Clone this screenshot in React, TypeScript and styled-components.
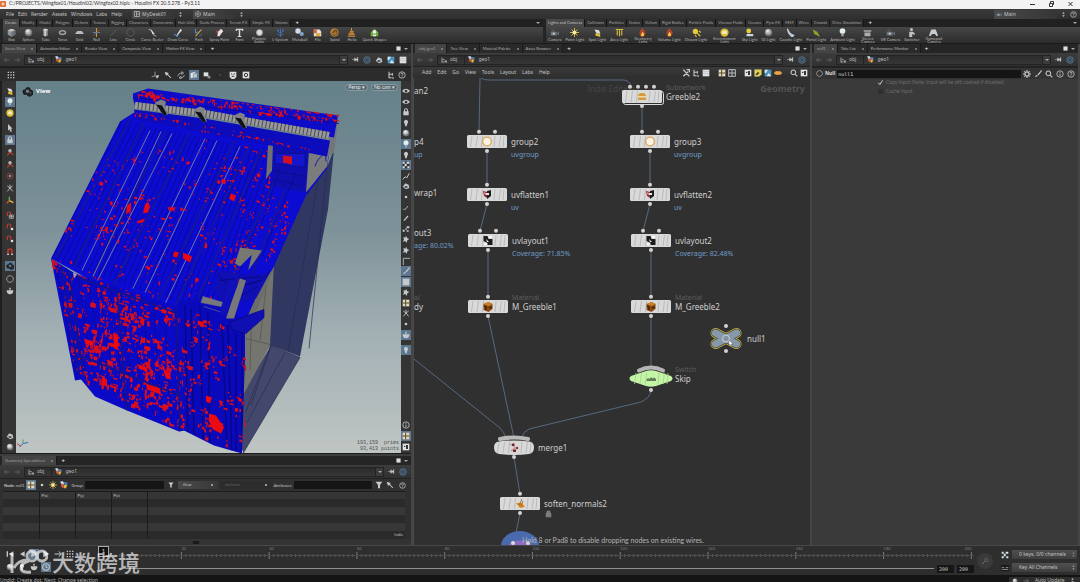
import React from "react";
import styled, { createGlobalStyle, css } from "styled-components";

const UI = `"Noto Sans", "Noto Sans CJK SC", sans-serif`;
const SMALL = `Lato, "Noto Sans", sans-serif`;

const GlobalStyle = createGlobalStyle`
  * { box-sizing: border-box; }
  html, body { margin: 0; background: #161616; }
  body { font-family: ${UI}; font-size: 5px; line-height: 7px; color: #c4c4c4; overflow: hidden; }
  button, input, select { font: inherit; color: inherit; margin: 0; padding: 0; border: 0; background: none; border-radius: 0; }
  a { color: inherit; text-decoration: none; }
  svg { display: block; }
`;

/* ---------- small icon set, drawn on a 12 x 12 grid ---------- */

type Draw = (c: string) => React.ReactNode;
const line = (d: string, w = 1.2): Draw => (c) => <path d={d} fill="none" stroke={c} strokeWidth={w} />;
const shape = (d: string): Draw => (c) => <path d={d} fill={c} />;

const drawings: Record<string, Draw> = {
  box: () => (
    <>
      <path d="M6 1 11 3v6l-5 2.500L1 9V3z" fill="#8f9499" />
      <path d="M6 1 11 3 6 5 1 3z" fill="#c3c7ca" />
      <path d="M6 5l5-2v6l-5 2.500z" fill="#6c7176" />
    </>
  ),
  sphere: (c) => (
    <>
      <circle cx="6" cy="6" r="5" fill="#70757a" />
      <circle cx="5.500" cy="5" r="3.600" fill={c} />
      <circle cx="5" cy="4" r="1.500" fill="#eef0f1" />
    </>
  ),
  tube: () => (
    <>
      <path d="M3 2h6v8q-3 2-6 0z" fill="#8e9499" />
      <path d="M4.500 3h2v8h-2z" fill="#cfd3d6" />
      <ellipse cx="6" cy="2.200" rx="3" ry="1.200" fill="#d8dadb" />
    </>
  ),
  torus: () => <ellipse cx="6" cy="6" rx="4" ry="2.500" fill="none" stroke="#9a9fa3" strokeWidth="2" />,
  grid: () => <path d="M3 4h6l3 4H0z" fill="#b9bdc0" />,
  nullAxes: () => (
    <>
      <path d="M6 0v12" stroke="#d6a63a" strokeWidth="1.200" />
      <path d="M1 6h10" stroke="#4f86c4" strokeWidth="1.200" />
      <path d="M2 10l8-8" stroke="#c2543a" />
    </>
  ),
  curve: () => (
    <>
      <path d="M1 2q5 0 5 4t5 5" fill="none" stroke="#9fb4c8" strokeWidth="1.200" />
      <path d="M3 1l6 7-3 0z" fill="#e3e6e8" />
    </>
  ),
  pen: () => (
    <>
      <path d="M10 1L5 9l-1 2 2-1 6-7z" fill="#d8dcdf" />
      <path d="M1 10q2-4 3 0t3 0" fill="none" stroke="#4e8cd0" strokeWidth="1.300" />
    </>
  ),
  path: () => (
    <>
      <path d="M2 11l8-9" stroke="#d8c24a" strokeWidth="1.400" />
      <path d="M2 1v6l3-2" stroke="#4e8cd0" strokeWidth="1.300" fill="none" />
      <path d="M7 11l4-3" stroke="#4e8cd0" />
    </>
  ),
  spray: () => (
    <>
      <path d="M4 5l4-4 3 3-5 7H3z" fill="#e9dede" />
      <path d="M1 3l3 2-1 3z" fill="#d04a3a" />
    </>
  ),
  font: () => <path d="M1 1h10v3H9.600L9 2.500H7v8h1.500V12h-5v-1.500H5v-8H3L2.400 4H1z" fill="#d4d7d9" />,
  platonic: () => (
    <>
      <circle cx="6" cy="6" r="4.500" fill="#a5a9ac" />
      <path d="M6 2l3.500 3L8 9H4L2.500 5z" fill="#dcdfe1" />
    </>
  ),
  lsystem: () => <path d="M6 12V1M6 7L1 3M6 7l5-4M6 10L2 8M6 10l4-2M3 5V1M9 5V1" stroke="#3f74b8" fill="none" strokeWidth="1.200" />,
  metaball: () => (
    <>
      <circle cx="4" cy="4" r="3.600" fill="#cfdcea" />
      <circle cx="9" cy="8" r="2.800" fill="#7ea6d0" />
    </>
  ),
  file: () => (
    <>
      <path d="M1 2h8l2 3v6H1z" fill="#e6e3dc" />
      <path d="M1 2h4v5H1z" fill="#d05a3a" />
      <path d="M5 7h6L8 11H3z" fill="#e0a03a" />
    </>
  ),
  spiral: () => (
    <>
      <circle cx="6" cy="6" r="5" fill="#6b4a22" stroke="#c98b3c" strokeWidth="1.200" />
      <path d="M6 6q1-2 2 0t-2 2-4-2 4-4" fill="none" stroke="#d99c4c" strokeWidth="1.200" />
    </>
  ),
  helix: () => (
    <>
      <path d="M6 1l5 9H1z" fill="#9a6526" />
      <path d="M6 0v3M4 5h5M2 8h8M1 11h10" fill="none" stroke="#d99c4c" strokeWidth="1.200" />
    </>
  ),
  quick: () => (
    <>
      <path d="M1 6l5-5 5 5v5H1z" fill="#6fae3c" />
      <circle cx="6" cy="5" r="2.500" fill="#eceeea" />
      <path d="M4 9h4v2H4z" fill="#e8f0e0" />
    </>
  ),
  circle: line("M6 1a5 5 0 1 0 .01 0z", 1),
  diag: line("M2 11L10 2", 1),
  camera: () => (
    <>
      <path d="M1 5h8v5H1zM9 7l3-2v5z" fill="#6d7479" />
      <circle cx="4" cy="3.500" r="2.200" fill="#4d5357" />
      <circle cx="5" cy="7.500" r="1.600" fill="#b8bdc0" />
    </>
  ),
  sun: () => (
    <>
      <path d="M6 0v12M0 6h12M2 2l8 8M10 2l-8 8" stroke="#e0c23a" strokeWidth="1.200" />
      <circle cx="6" cy="6" r="2.600" fill="#f6ecb0" />
    </>
  ),
  distant: () => (
    <>
      <circle cx="4.500" cy="4.500" r="3.500" fill="#e6cb3c" />
      <path d="M7 7l4 4M4 9l2 3M9 4l3 2" stroke="#d8bf38" strokeWidth="1.600" />
    </>
  ),
  spot: () => (
    <>
      <path d="M2 2l6 1 2 5-6-2z" fill="#dfe2e4" />
      <path d="M4 6l5 2 1 4-7-2z" fill="#e0c23a" />
    </>
  ),
  area: () => <path d="M1 2h10M3 3v7M6 3v8M9 3v7" stroke="#d9bd3c" strokeWidth="1.500" fill="none" />,
  flame: () => (
    <>
      <path d="M6 0q5 5 4 8t-4 4-4-4 4-8z" fill="#a8432c" />
      <path d="M6 5q2 2 2 4t-2 2-2-2z" fill="#f0d04a" />
    </>
  ),
  sky: () => (
    <>
      <circle cx="5" cy="4" r="3.200" fill="#e6cb3c" />
      <path d="M2 8h9v3H2z" fill="#c9d5df" />
    </>
  ),
  env: () => (
    <>
      <circle cx="6" cy="6" r="5.500" fill="#d8bf38" />
      <path d="M3 5q3-4 6 0v3H3z" fill="#f3ecc2" />
    </>
  ),
  bulb: () => (
    <>
      <circle cx="6" cy="4" r="3.800" fill="#e4f0ea" />
      <path d="M4.500 7h3v4h-3z" fill="#9fb0a8" />
    </>
  ),
  caustic: () => <path d="M2 1q2 7 9 9l-3 2Q2 8 2 1z" fill="#b8c9dc" stroke="#d9e4ef" />,
  portal: () => <path d="M1 2l6 3 4 7-8-4z" fill="#87a52c" />,
  stereo: () => <path d="M1 3h10v2H1zM2 6h8v5H2z" fill="#a9adb0" />,
  person: () => <path d="M6 0a2 2 0 1 1 0 4 2 2 0 0 1 0-4zM3 5h5l3 3-1 1-3-1v4H3z" fill="#bfc3c6" />,
  gamepad: () => <path d="M3 2h6l3 8-2 1-2-3H4l-2 3-2-1z" fill="#c9ccce" />,
  dotgrid: shape("M1 1h2v2H1zM5 1h2v2H5zM9 1h2v2H9zM1 5h2v2H1zM5 5h2v2H5zM9 5h2v2H9zM1 9h2v2H1zM5 9h2v2H5zM9 9h2v2H9z"),
  cursor: shape("M3 0l7 7H7l2 4-2 1-2-4-2 2z"),
  lock: shape("M2 5h1V3.500a3 3 0 0 1 6 0V5h1v6H2zM4.500 5h3V3.500a1.500 1.500 0 0 0-3 0z"),
  select: () => (
    <>
      <path d="M2 11l4-5 5 4" stroke="#b8402e" strokeWidth="1.800" fill="none" />
      <circle cx="6" cy="4" r="2.600" fill="#b5b8ba" />
    </>
  ),
  ring: () => (
    <>
      <circle cx="6" cy="6" r="4.200" fill="none" stroke="#8a3a32" strokeWidth="1.500" />
      <circle cx="6" cy="6" r="2" fill="#8c9093" />
    </>
  ),
  joint: line("M6 1v5M6 6l-4 5M6 6l4 5M2 3l4 3 4-3", 1.300),
  axes: () => (
    <>
      <path d="M5 7V1" stroke="#62b04a" strokeWidth="2" />
      <path d="M5 7l-4 4" stroke="#d4483a" strokeWidth="2" />
      <path d="M5 7l6 3" stroke="#e0c23a" strokeWidth="2" />
    </>
  ),
  magnet: () => (
    <>
      <path d="M3 11V6a3 3 0 0 1 6 0v5" fill="none" stroke="#c23a30" strokeWidth="2.400" />
      <path d="M1.800 10h2.400v2H1.800zM7.800 10h2.400v2H7.800z" fill="#dfe1e2" />
    </>
  ),
  magnetGrid: () => (
    <>
      <path d="M2 8V4a2.500 2.500 0 0 1 5 0v4" fill="none" stroke="#c23a30" strokeWidth="1.800" />
      <path d="M5 6h6v5H5zM8 6v5M5 8.500h6" fill="none" stroke="#cfd2d4" strokeWidth=".9" />
    </>
  ),
  magnetDot: () => (
    <>
      <path d="M2 8V4a2.500 2.500 0 0 1 5 0v3" fill="none" stroke="#c23a30" strokeWidth="1.800" />
      <circle cx="9" cy="9" r="2" fill="#dfe1e2" />
    </>
  ),
  blob: () => (
    <>
      <path d="M1 5l3-1 1-2h3l1 2 3 2v3l-3 2H7L5 9 2 9z" fill="#23272a" stroke="#101213" />
      <path d="M5 4h2l1 2-2 2-2-2z" fill="#79828a" />
      <path d="M8 6l2 1-1 2z" fill="#5c656c" />
    </>
  ),
  bowl: shape("M1 5h10q0 6-5 6T1 5zM5 1h2v3H5z"),
  eye: shape("M0 6q6-7 12 0-6 6-12 0zM6 4a2 2 0 1 0 .01 0z"),
  pin: shape("M6 1a3.500 3.500 0 0 1 2 6l-1 4H5L4 7a3.500 3.500 0 0 1 2-6z"),
  dot: shape("M6 4a2 2 0 1 1 0 4 2 2 0 0 1 0-4z"),
  tick: line("M2 7l2 2 5-6", 1.200),
  slash: line("M3 10l6-7", 1.800),
  nodes: shape("M1 7h3v3H1zM7 2h4v3H7zM5 5h2v2H5zM7 8h3v2H7z"),
  star: shape("M6 1l2 4 3 1-3 2-1 4-2-3-4 1 2-3-1-4 3 1z"),
  corner: line("M2 12V2h10", 1.200),
  square: shape("M1 1h10v10H1z"),
  frame: () => (
    <>
      <path d="M1 1h10v10H1z" fill="#e2e4e5" />
      <path d="M3 4h2v2H3zM6 3h3v6H6z" fill="#33373a" />
    </>
  ),
  axisPick: () => <path d="M6 1v6M6 7l-5 2M6 7l3 3M8 7h4l-3 4z" fill="#c6c9cb" stroke="#c6c9cb" />,
  loop: () => <path d="M1 8q1-5 6-5M7 1l3 2-3 2zM11 6q0 4-5 4M6 8v4L3 10z" fill="none" stroke="#c6c9cb" />,
  cards: () => (
    <>
      <path d="M1 3l7-2v8l-7 2z" fill="#dfe5ea" />
      <path d="M5 4l6-1v7l-6 1z" fill="#b9c4cf" stroke="#51687f" strokeWidth=".7" />
    </>
  ),
  thumb: () => (
    <>
      <path d="M1 2h7v6H1z" fill="#dcdedf" />
      <circle cx="9" cy="9" r="2.400" fill="#888d90" />
    </>
  ),
  checker: () => (
    <>
      <path d="M1 1h10v10H1z" fill="#2e3336" />
      <path d="M1 1h3v3H1zM7 1h4v3H7zM4 4h3v4H4zM1 8h3v3H1zM8 8h3v3H8z" fill="#dde0e2" />
    </>
  ),
  page: () => (
    <>
      <path d="M1 1h10v7l-3 3H1z" fill="#dfcf4a" stroke="#f1e9a0" strokeWidth=".6" />
      <path d="M2 9l4-5 2 2-3 3z" fill="#3a3a2c" />
    </>
  ),
  picture: () => (
    <>
      <path d="M1 1h10v10H1z" fill="#4a93bb" />
      <path d="M1 1h5L3 6H1zM7 6l4 5H4z" fill="#d9e6ee" />
    </>
  ),
  basket: () => (
    <>
      <path d="M2 3h8v6H2z" fill="#d68a2c" />
      <path d="M0 5h12v2H0z" fill="#efb457" />
    </>
  ),
  layout: () => (
    <>
      <path d="M1 1h10v10H1z" fill="#e0d9bd" />
      <path d="M5.500 1v10M1 6h10" stroke="#5a4a28" strokeWidth="1.500" />
    </>
  ),
  gridLine: line("M1 1h10v10H1zM1 6h10M6 1v10", 1.400),
  wrench: line("M2 11l7-7M2 1l9 10M7 1h4v4", 2),
  tree: line("M3 1v9h4M3 5h4M8 3v4M9 9v3", 1.600),
  list: () => (
    <>
      <path d="M1 1h10v10H1z" fill="#dfe1e2" />
      <path d="M1 4h10M1 7h10" stroke="#a5a8aa" strokeWidth=".7" />
    </>
  ),
  scope: () => (
    <>
      <path d="M0 2h12v8H0z" fill="#0e0e0e" />
      <path d="M1 5h4M7 5h4M1 8h10" stroke="#dcdedf" />
    </>
  ),
  search: line("M5 1.500a3.500 3.500 0 1 0 .01 0zM8 8l3 3", 1.600),
  pushpin: shape("M0 5.500h4V3h2v1.500h3V2h1.500v8H9V7.500H6V9H4V6.500H0z"),
  globe: () => (
    <>
      <circle cx="6" cy="6" r="5" fill="#34495d" stroke="#6c8194" strokeWidth="1" />
      <circle cx="6" cy="6" r="2.500" fill="none" stroke="#52687c" />
    </>
  ),
  help: (c) => (
    <>
      <circle cx="6" cy="6" r="4.800" fill="none" stroke={c} strokeWidth="1.200" />
      <path d="M4.300 4.800q0-1.500 1.700-1.500t1.700 1.300Q7.700 5.500 6 6.300v.9M6 8v1.200" fill="none" stroke={c} strokeWidth="1.100" />
    </>
  ),
  info: (c) => (
    <>
      <circle cx="6" cy="6" r="4.800" fill="none" stroke={c} strokeWidth="1.200" />
      <path d="M6 3v1.200M6 5.300V9" stroke={c} strokeWidth="1.300" />
    </>
  ),
  gear: line("M6 3a3 3 0 1 0 .01 0zM6 0v3M6 9v3M0 6h3M9 6h3M2 2l2 2M8 8l2 2M10 2L8 4M4 8l-2 2", 1.700),
  brush: shape("M11 0L5 7l2 1 5-7zM4 7L1 11l5-2z"),
  back: line("M11 6H1M5 2L1 6l4 4", 1.500),
  fwd: line("M1 6h10M7 2l4 4-4 4", 1.500),
  objNet: shape("M1 1h2v8h3v2H1zM4 4h3v2H4zM7 7h5v4H7z"),
  geo: () => (
    <>
      <path d="M0 1l4-1 3 4-4 2z" fill="#c9d3da" />
      <path d="M1 6l5-2v6H3z" fill="#d4553a" />
      <path d="M6 2h5v4H7z" fill="#4a7fc0" />
      <path d="M6 6h5l-2 5H6z" fill="#e0b63a" />
    </>
  ),
  funnel: shape("M1 1h10L7.500 6v5h-3V6z"),
  marker: line("M1 11l4-4 2 2 4-7", 1.500),
  arrowPick: shape("M1 1l6 2-1 2 5 5-1 1-5-5-2 1z"),
  pane: line("M1 1h10v10H1zM5 1v10M5 6h6", 1.300),
  target: line("M6 1a5 5 0 1 0 .01 0zM6 3v6M3 6h6", 1.200),
  updown: shape("M6 0l3 4H3zM6 12l3-4H3z"),
  cloud: () => (
    <>
      <path d="M1 7l4-5 5 2 1 5-5 2z" fill="#bfc3c6" />
      <path d="M4 6h4v3H4z" fill="#55595c" />
    </>
  ),
  clock: line("M6 1a5 5 0 1 0 .01 0zM6 3v3l2 1", 1.600),
  skull: () => (
    <>
      <path d="M1 1h10v8l-3 3H4L1 9z" fill="#dcdedf" />
      <path d="M3 4l2 1M9 4L7 5M4 8h4" stroke="#2b2b2b" strokeWidth="1.400" />
    </>
  ),
  camBox: () => (
    <>
      <path d="M1 1h10v10H1z" fill="#dcdedf" />
      <circle cx="6" cy="6" r="2.500" fill="none" stroke="#2b2b2b" strokeWidth="1.400" />
    </>
  ),
  key: line("M8 2a2.500 2.500 0 1 0 .01 0zM6 6l-5 5M3 9l1 1", 1),
  first: shape("M1 2h2v8H1zM11 2v8L4 6z"),
  prev: shape("M10 2v8L3 6z"),
  play: shape("M2 1l9 5-9 5z"),
};

const Icon = ({ name, size = 8, color = "#c6c9cb" }: { name: string; size?: number; color?: string }) => (
  <svg width={size} height={size} viewBox="0 0 12 12" aria-hidden="true">
    {drawings[name](color)}
  </svg>
);

/* ---------- frame ---------- */

const Desktop = styled.div`
  display: flex;
  flex-direction: column;
  height: 100vh;
  min-height: 400px;
  background: #2b2b2b;
`;

const TitleBar = styled.header`
  display: flex;
  align-items: center;
  flex: 0 0 9px;
  gap: 3px;
  padding: 0 7px 2px 0;
  background: #f3f3f3;
  color: #333;
  font-family: ${SMALL};
  white-space: nowrap;
`;
const AppBadge = styled.span`
  width: 6px;
  height: 6px;
  margin-top: 1px;
  border-radius: 1px;
  background: radial-gradient(circle at 3px 3px, #f6c9a8 1px, #e0703a 2px);
`;
const WindowButtons = styled.div`
  display: flex;
  gap: 14px;
  margin-left: auto;
`;
const WindowButton = styled.button`
  width: 5px;
  height: 6px;
`;

const MenuBar = styled.nav`
  display: flex;
  align-items: center;
  flex: 0 0 10px;
  padding: 0 3px 0 6px;
  gap: 4px;
  background: linear-gradient(#3a3a3a, #2f2f2f);
`;
const MenuItem = styled.button`
  height: 9px;
  white-space: nowrap;
`;
const DesktopPicker = styled.button<{ $push?: boolean }>`
  display: flex;
  align-items: center;
  gap: 2px;
  width: ${(p) => (p.$push ? 63 : 42)}px;
  height: 9px;
  padding-left: 2px;
  margin-left: ${(p) => (p.$push ? "auto" : "6px")};
  background: linear-gradient(90deg, #4a4a4a, #353535);
`;

/* ---------- shelves ---------- */

const Shelves = styled.section`
  display: grid;
  grid-template-columns: minmax(0, 543fr) minmax(0, 537fr);
  flex: 0 0 25px;
  border-bottom: 1px solid #1b1b1b;
`;
const Shelf = styled.div`
  display: flex;
  flex-direction: column;
  min-width: 0;
  overflow: hidden;
  border-left: 3px solid #242424;
`;
const ShelfTabs = styled.div`
  display: flex;
  align-items: stretch;
  flex: 0 0 8px;
  background: #212121;
`;
const ShelfTab = styled.button<{ $active?: boolean }>`
  padding: 0 2px;
  border-right: 1px solid #151515;
  background: ${(p) => (p.$active ? "#484848" : "#2d2d2d")};
  color: ${(p) => (p.$active ? "#c0c0c0" : "#a4a4a4")};
  font-family: ${SMALL};
  font-size: 4px;
  line-height: 8px;
  white-space: nowrap;
`;
const PlusTab = styled.button`
  width: 12px;
  color: #e8e8e8;
  font-size: 6px;
  font-weight: 700;
  line-height: 8px;
`;
const TabTail = styled.span`
  display: flex;
  align-items: center;
  gap: 3px;
  margin-left: auto;
  padding-right: 3px;
`;
const ShelfTools = styled.div`
  display: flex;
  align-items: stretch;
  flex: 1;
  background: linear-gradient(#464646, #2c2c2c);
`;
const Tool = styled.button<{ $two?: boolean }>`
  display: flex;
  flex-direction: column;
  align-items: center;
  flex: none;
  min-width: 17px;
  padding: 1px ${(p) => (p.$two ? 4 : 2)}px 0;
  color: #b4b4b4;
  font-family: ${SMALL};
  font-size: 4px;
  line-height: 4px;
  text-align: center;
  white-space: pre;
`;
const ToolLabel = styled.span<{ $two?: boolean }>`
  margin-top: ${(p) => (p.$two ? 0 : 1)}px;
  line-height: ${(p) => (p.$two ? 3 : 4)}px;
`;

/* ---------- panes ---------- */

const Workspace = styled.main`
  display: grid;
  grid-template-columns: minmax(0, 413fr) minmax(0, 399fr) minmax(0, 268fr);
  flex: 1;
  min-height: 0;
`;
const Pane = styled.section<{ $tone?: string }>`
  display: flex;
  flex-direction: column;
  min-width: 0;
  min-height: 0;
  border-right: 2px solid #454545;
  background: ${(p) => p.$tone || "#2f2f2f"};
`;
const PaneTabs = styled.div`
  display: flex;
  flex: 0 0 9px;
  padding-left: 2px;
  background: #252525;
`;
const PaneTab = styled.button<{ $active?: boolean }>`
  display: flex;
  align-items: center;
  justify-content: space-between;
  gap: 6px;
  padding: 0 3px;
  border-right: 1px solid #1a1a1a;
  background: ${(p) => (p.$active ? "#444" : "#2a2a2a")};
  color: ${(p) => (p.$active ? "#a0a0a0" : "#b4b4b4")};
  font-family: ${SMALL};
  font-size: 4px;
  line-height: 9px;
  white-space: nowrap;
  &::after {
    content: "";
    width: 2px;
    height: 2px;
    border-radius: 1px;
    background: #8a8a8a;
  }
`;
const PathRow = styled.div`
  display: flex;
  align-items: center;
  flex: 0 0 14px;
  gap: 2px;
  padding: 0 3px 0 4px;
  background: linear-gradient(#3c3c3c, #313131);
  border-bottom: 1px solid #222;
`;
const PathNav = styled.button`
  width: 8px;
  opacity: 0.35;
`;
const PathField = styled.div`
  display: flex;
  align-items: center;
  flex: 1;
  min-width: 0;
  height: 10px;
  padding-left: 3px;
  gap: 3px;
  border: 1px solid #232323;
  background: linear-gradient(#2c2c2c, #363636);
`;
const PathPart = styled.a`
  display: flex;
  align-items: center;
  gap: 3px;
  height: 8px;
  padding-right: 4px;
  color: #bdbdbd;
  & + & { border-left: 1px solid #222; padding-left: 3px; }
`;
const DropButton = styled.button`
  display: flex;
  align-items: center;
  justify-content: center;
  width: 8px;
  height: 8px;
  margin-left: auto;
  border-left: 1px solid #222;
  background: #3b3b3b;
`;
const Caret = styled.span`
  border: solid transparent;
  border-width: 2px 2px 0;
  border-top-color: #a8a8a8;
`;
const IconButton = styled.button<{ $on?: boolean; $dim?: boolean }>`
  display: flex;
  align-items: center;
  justify-content: center;
  flex: none;
  width: 10px;
  height: 10px;
  background: ${(p) => (p.$on ? "#5d7790" : "transparent")};
  opacity: ${(p) => (p.$dim ? 0.3 : 1)};
`;
const Toolbar = styled.div`
  display: flex;
  align-items: center;
  justify-content: center;
  flex: 0 0 14px;
  padding: 0 4px 0 7px;
  background: #2c2c2c;
  border-top: 1px solid #1c1c1c;
`;
const ToolGroup = styled.div<{ $start?: boolean; $end?: boolean; $gap?: number }>`
  display: flex;
  align-items: center;
  gap: ${(p) => p.$gap ?? 1}px;
  ${(p) => p.$start && css`margin-right: auto;`}
  ${(p) => p.$end && css`margin-left: auto;`}
`;

/* ---------- scene viewer ---------- */

const SceneArea = styled.div`
  display: flex;
  flex: 1;
  min-height: 0;
`;
const Strip = styled.div<{ $wide?: boolean }>`
  display: flex;
  flex-direction: column;
  align-items: center;
  flex: 0 0 ${(p) => (p.$wide ? 16 : 10)}px;
  padding: 5px 0 0 ${(p) => (p.$wide ? 2 : 0)}px;
  background: #343434;
  border-left: ${(p) => (p.$wide ? 2 : 0)}px solid #1e1e1e;
  overflow: hidden;
`;
const StripGroup = styled.div<{ $h: number; $bottom?: boolean }>`
  display: flex;
  flex-direction: column;
  justify-content: space-between;
  flex: 0 0 ${(p) => p.$h}px;
  margin-top: ${(p) => (p.$bottom ? "auto" : "0")};
  margin-bottom: ${(p) => (p.$bottom ? 1 : 5)}px;
`;
const Viewport = styled.div`
  position: relative;
  flex: 1;
  min-width: 0;
  background: linear-gradient(#648089, #7e9299 40%, #a2b0b4 68%, #bfc5c3);
  overflow: hidden;
`;
const ModelDrawing = styled.svg`
  position: absolute;
  inset: 0;
  width: 100%;
  height: 100%;
`;
const ViewTitle = styled.div`
  position: absolute;
  top: 5px;
  left: 6px;
  display: flex;
  align-items: center;
  gap: 3px;
  color: #fff;
  font-size: 6px;
  font-weight: 700;
`;
const CameraMenus = styled.div`
  position: absolute;
  top: 3px;
  right: 3px;
  display: flex;
  gap: 3px;
`;
const CameraMenu = styled.button`
  height: 7px;
  padding: 0 2px;
  border: 1px solid #8b9ba1;
  border-radius: 4px;
  background: #566a72;
  color: #e6e6e6;
  font-family: ${SMALL};
  font-size: 5px;
  line-height: 5px;
`;
const Stats = styled.div`
  position: absolute;
  right: 2px;
  bottom: 1px;
  color: #4c5250;
  font-family: "Liberation Mono", monospace;
  font-size: 5px;
  line-height: 6px;
  text-align: right;
  white-space: pre;
`;

function seeded(seed: number) {
  let s = seed;
  return () => {
    s = (s * 16807) % 2147483647;
    return s / 2147483647;
  };
}

type Pt = [number, number];
const speckle = (seed: number, n: number, a: Pt, b: Pt, c: Pt, d: Pt, max: number, spread = 0.09) => {
  const r = seeded(seed);
  const out: string[] = [];
  let cu = 0.5;
  let cv = 0.5;
  for (let i = 0; i < n; i++) {
    if (i % 4 === 0) {
      cu = r();
      cv = r();
    }
    const u = Math.min(1, Math.max(0, cu + (r() - 0.5) * spread));
    const v = Math.min(1, Math.max(0, cv + (r() - 0.5) * spread));
    const x = (1 - v) * ((1 - u) * a[0] + u * b[0]) + v * ((1 - u) * d[0] + u * c[0]);
    const y = (1 - v) * ((1 - u) * a[1] + u * b[1]) + v * ((1 - u) * d[1] + u * c[1]);
    const w = 0.8 + r() * r() * max;
    const h = 0.8 + r() * r() * max;
    out.push(`M${x.toFixed(1)} ${y.toFixed(1)}l${w.toFixed(1)} ${(w * 0.3).toFixed(1)} ${(-h * 0.15).toFixed(1)} ${h.toFixed(1)} ${(-w).toFixed(1)} ${(-w * 0.3).toFixed(1)}z`);
  }
  return out.join("");
};

const slopeSpots = speckle(41, 400, [122, 121], [306, 158], [226, 330], [50, 258], 3.500);
const rightSpots = speckle(97, 110, [262, 150], [306, 180], [262, 290], [220, 280], 3);
const frontSpots = speckle(13, 720, [51, 258], [180, 312], [184, 430], [76, 375], 5.500);
const sideSpots = speckle(71, 200, [180, 306], [246, 335], [244, 453], [184, 430], 4.500);
const topSpots = speckle(29, 240, [138, 89], [338, 114], [334, 122], [138, 95], 3.500);
const underSpots = speckle(57, 70, [136, 111], [325, 145], [320, 154], [134, 117], 2.500);

const ribs = Array.from({ length: 34 }, (_, i) => {
  const t = i / 33;
  return `M${122 + t * 160} ${121 + t * 32}L${52 + t * 170} ${258 + t * 60}`;
}).join("");
const walls = Array.from({ length: 12 }, (_, i) => {
  const t = i / 11;
  return `M${55 + t * 120} ${261 + t * 48}l${22 - t * 16} ${116}`;
}).join("");

const Model = () => (
  <ModelDrawing viewBox="16 80 385 373" preserveAspectRatio="xMidYMid slice" role="img" aria-label="Building model in perspective">
    <defs>
      <clipPath id="slope"><path d="M51 258l69-137 14-9 196 34-3 22-21 27-36 78-22 50-62 2-130-66z" /></clipPath>
      <clipPath id="front"><path d="M51 258l24 15 105 34 5 123-6 1-52-21-32-14-14-17-6 1z" /></clipPath>
      <clipPath id="side"><path d="M178 300l24-2 44 28v104l-3 23-28-8-32-16z" /></clipPath>
    </defs>
    <path d="M306 192l22-28 6-15-6 60-28 147-29-11-30 30 24-110z" fill="#303861" />
    <path d="M271 345l29 12-57 96v-62z" fill="#44476c" />
    <path d="M271 345l29 12-57 96M327 168l-18 180M318 180l-30 170M271 345l-20 60M285 352l-38 70M271 345l-25 66" fill="none" stroke="#262c50" strokeWidth=".7" />
    <path d="M274 262l-4 83-26 48-1-80z" fill="#74756f" />
    <path d="M246 338l24 6M268 268l-8 72M252 300l-2 70" fill="none" stroke="#565750" strokeWidth=".8" />
    <path d="M51 258l69-137 14-9 196 34-3 22-21 27-34 75-25 60-68-2-128-70z" fill="#0b0bd2" />
    <g clipPath="url(#slope)">
      <path d={ribs} stroke="#0a0a8e" strokeWidth=".8" />
      <path d="M130 118L56 258M144 122L74 266M166 130L88 285M190 132l-78 156M235 140l-82 170M250 144l-76 164M262 148l-70 165M283 160l-66 150M292 170l-50 130" stroke="#1515a2" strokeWidth="2.200" />
      <path d="M150 130L82 270M161 131L93 276M172 133l-76 150M205 138l-72 150M217 140l-72 152M240 146l-80 168" stroke="#7e86a4" strokeWidth=".9" />
      <path d={slopeSpots + rightSpots} fill="#dc0e1c" />
      <path d="M127 205l4-3v8l-5 4zM145 204l3-3 2 5-2 6-5 1zM139 220l6-2-2 4-6 1zM174 251l5 1-2 5-4-1zM183 252l9 4-2 6-7-4zM231 193l5 2-2 6-5-3zM222 178l4 2-1 4-4-2zM187 161l3 0-1 3-3 0z" fill="#e80a10" />
    </g>
    <path d="M268 145l5-2-1 27-6 9z" fill="#6e7072" />
    <path d="M273 143l12-9 24 12v47l-36-8z" fill="#0f0fae" />
    <path d="M275 153h30v14l-30-4z" fill="#1515cc" stroke="#0c0c80" strokeWidth=".7" />
    <path d="M272 170l34 6M273 178l30 8M280 168l-20 60M296 172l-34 84" stroke="#0b0b86" strokeWidth=".8" />
    <path d="M283 155l9 1v8l-9-2z" fill="#d3101c" />
    <path d="M309 150l22-12-4 28-21 26z" fill="#7b7c7c" />
    <path d="M315 166q2-8 11-14M325 143l1 18" fill="none" stroke="#1a1ab0" />
    <path d="M332 120l7-4-5 36-7 4z" fill="#73757a" />
    <path d="M240 247l22 3-8 12-6 8 4-16-12 12-5-3z" fill="#77786f" />
    <path d="M238 275l22 10 14-18-20 50-6-2 14-32-14 12-14-6z" fill="#6c6d68" />
    <path d="M220 270l30 5 20-3-14 26-30 8-12-18z" fill="#0f0fb4" />
    <path d="M216 270q6 18 30 14 18-3 24-14" fill="none" stroke="#0a0a84" />
    <path d="M220 280l40-4M224 290l38-10M232 300l26-14M240 275l-12 26" stroke="#090980" strokeWidth="1" />
    <path d="M229 283l12-5-4 6-8 3z" fill="#e00d18" />
    <path d="M178 300l24-2 28 8 15 20v30l-3 97-28-8-32-16z" fill="#0a0abc" />
    <g clipPath="url(#side)">
      <path d="M185 305l3 130M191 308l3 130M200 305l3 140M208 312l2 140M222 322l5 130M228 324l4 130M236 332v130M242 330v120" stroke="#07077e" strokeWidth="1.300" />
      <path d={sideSpots} fill="#d80f1c" />
      <path d="M209 413l7 2 8 12-3 6-8-4-4-8zM206 395l6 2-2 6-4-2z" fill="#ea0a10" />
    </g>
    <path d="M51 258l24 15 105 34 5 123-6 1-52-21-32-14-14-17-6 1z" fill="#0a0ac6" />
    <g clipPath="url(#front)">
      <path d={walls} stroke="#0a0a96" strokeWidth=".8" />
      <path d={frontSpots} fill="#d80e1c" />
      <path d="M61 264l18 110M69 270l14 104M117 290l10 120M176 308l4 124M75 276l100 36M82 356l100 40" stroke="#12128e" strokeWidth="1.800" fill="none" />
      <path d="M146 383l14 5 1 6-14-5zM84 338l10 3-1 5-8-3zM113 332l5 2v14h-4zM163 369l7 3 1 7-5-1zM139 364l8 3v4l-8-3zM102 376l5 3v8l-5-4z" fill="#ea0a10" />
    </g>
    <path d="M73 272l4 2-3 4z" fill="#9aa0b0" />
    <path d="M203 296l20 6-2 4-20-4zM204 306l18 6" fill="#77787a" stroke="#77787a" strokeWidth=".6" />
    <path d="M230 322l20-8 14-5v8l-18 16-14-4z" fill="#0f0fb4" stroke="#08087a" strokeWidth=".7" />
    <path d="M226 318l6-18 8-22 6 2-12 38z" fill="#77787a" />
    <path d="M228 282l12-6-14 40-6-4z" fill="#1010b8" />
    <path d="M133 93l15-5 190 27-4 22-60-10-69-13-70-8-2-8z" fill="#0d0dc9" />
    <path d="M134 97l205 26" stroke="#08088c" strokeWidth=".8" />
    <path d={topSpots} fill="#dd0e1a" />
    <path d="M135 105l70 8 124 22" fill="none" stroke="#4a4b58" strokeWidth="7" />
    <path d="M135 105l70 8 124 22" fill="none" stroke="#98999a" strokeWidth="7" strokeDasharray="2.800 1" />
    <path d="M134 109l70 9 126 22-3 16-191-37z" fill="#0c0cbc" />
    <path d={underSpots} fill="#dd0e1a" />
    {[[155, 99], [194, 106], [234, 112]].map(([x, y]) => (
      <g key={x}>
        <path d={`M${x} ${y + 3}l6-3 5 2-1 5 3 8-4 1-8-10z`} fill="#7f8184" />
        <path d={`M${x + 1} ${y + 5}l6 1 5 9-3 1z`} fill="#111217" />
      </g>
    ))}
    <path d="M20 446l3-3 5-1" fill="none" stroke="#3a5fd0" />
    <path d="M17 443l4 3" stroke="#c83a3a" />
    <path d="M23 443v-4" stroke="#3aa85a" />
  </ModelDrawing>
);

/* ---------- spreadsheet ---------- */

const Splitter = styled.div`
  flex: 0 0 3px;
  background: #3d3d3d;
  border-top: 1px solid #1d1d1d;
`;
const SheetBar = styled.div`
  display: flex;
  align-items: center;
  flex: 0 0 12px;
  gap: 2px;
  padding: 0 4px;
  background: #303030;
  font-family: ${SMALL};
  font-size: 4px;
`;
const DarkInput = styled.input`
  flex: 1;
  min-width: 0;
  height: 8px;
  background: #151515;
`;
const SheetSelect = styled.select<{ $off?: boolean }>`
  appearance: none;
  width: ${(p) => (p.$off ? 52 : 40)}px;
  height: 8px;
  padding-left: 5px;
  background:
    linear-gradient(#999, #999) right 5px center / 2px 2px no-repeat,
    ${(p) => (p.$off ? "linear-gradient(#2c2c2c, #2c2c2c)" : "linear-gradient(90deg, #4a4a4a, #383838)")};
  color: ${(p) => (p.$off ? "#666" : "#c4c4c4")};
  line-height: 8px;
`;
const SheetBody = styled.div`
  flex: 0 0 48px;
  margin: 0 6px 0 3px;
  overflow: hidden;
  border-top: 1px solid #1c1c1c;
`;
const Sheet = styled.table`
  width: 100%;
  table-layout: fixed;
  border-collapse: collapse;
  font-family: ${SMALL};
  font-size: 4px;
  th, td { height: 8px; padding: 0 2px; border-right: 1px solid #1b1b1b; line-height: 6px; }
  th { height: 7px; background: #353535; font-weight: 400; text-align: left; }
  th:last-child, td:last-child { border-right: 0; }
  tbody tr:nth-child(odd) { background: #2a2a2a; }
  tbody tr:nth-child(even) { background: #373737; }
`;
const ColumnWidth = styled.col<{ $w?: number }>`
  width: ${(p) => (p.$w ? `${p.$w}px` : "auto")};
`;
const ScrollTrack = styled.div`
  display: flex;
  align-items: center;
  justify-content: center;
  flex: 0 0 6px;
  background: #333;
  &::after { content: ""; width: 6px; height: 3px; margin-right: 20px; background: #1a1a1a; }
`;

/* ---------- network editor ---------- */

const NetworkMenu = styled.div`
  display: flex;
  align-items: center;
  flex: 0 0 11px;
  gap: 6px;
  padding: 0 1px 0 9px;
  background: linear-gradient(#3a3a3a, #2e2e2e);
`;
const Network = styled.div`
  position: relative;
  flex: 1;
  min-height: 0;
  border-left: 1px solid #4a4a4a;
  background: #303030;
  overflow: hidden;
`;
const Wires = styled.svg`
  position: absolute;
  top: 0;
  left: 0;
  overflow: visible;
`;
const NodeBox = styled.div<{ $x: number; $y: number }>`
  position: absolute;
  left: ${(p) => p.$x}px;
  top: ${(p) => p.$y}px;
  display: flex;
  align-items: center;
  height: 13px;
  gap: 4px;
  font-size: 8px;
  line-height: 10px;
  white-space: nowrap;
`;
const NodeText = styled.div`
  position: relative;
  color: #cfcfcf;
`;
const NodeType = styled.span`
  position: absolute;
  left: 0;
  bottom: 9px;
  color: #5c5c5c;
  font-size: 7px;
  line-height: 10px;
`;
const NodeInfo = styled.span`
  position: absolute;
  left: 0;
  top: 13px;
  color: #6f9bc8;
  font-size: 7px;
  line-height: 10px;
`;
const Watermark = styled.span<{ $right?: boolean }>`
  position: absolute;
  top: 5px;
  right: ${(p) => (p.$right ? 5 : 175)}px;
  color: ${(p) => (p.$right ? "#535353" : "#454545")};
  font-size: ${(p) => (p.$right ? 9 : 8)}px;
  font-weight: ${(p) => (p.$right ? 700 : 400)};
  line-height: 12px;
`;
const Hint = styled.div`
  position: absolute;
  left: 108px;
  bottom: 0;
  color: #b5b5b5;
  font-family: ${SMALL};
  font-size: 7px;
  line-height: 10px;
  white-space: nowrap;
`;

type NodeKind = "group" | "flatten" | "layout" | "material" | "subnet" | "merge" | "switch" | "null" | "soften";

const glyphs: Record<NodeKind, React.ReactNode> = {
  group: <circle cx="20" cy="6.500" r="4.300" fill="#fbf3e4" stroke="#e0a45a" strokeWidth="1.300" />,
  flatten: (
    <>
      <path d="M16 3l4 1v6l-3-2z" fill="#8f2b35" />
      <path d="M20 3l4-1v6l-4 3z" fill="#1d1d1f" />
      <path d="M19 5h3v2h-3z" fill="#e8e8e8" />
      <path d="M17 4l2 1v2l-2-1z" fill="#d98a90" />
    </>
  ),
  layout: (
    <>
      <path d="M15.500 2h4l1 3h4v6h-5V9l-4-2z" fill="#1c1d1f" />
      <path d="M21 2h3v2h-3zM16 9h3v2h-3zM18 5l3 3h-2z" fill="#fafafa" />
    </>
  ),
  material: (
    <>
      <path d="M15.500 4l5-2 4 2v5l-4 3-5-2z" fill="#8a4a12" />
      <path d="M15.500 4l5-2 4 2-4 2z" fill="#c98226" />
      <path d="M16 6l2 1v3M21 8l3-1" fill="none" stroke="#2c1705" strokeWidth="1.200" />
    </>
  ),
  subnet: (
    <>
      <path d="M16 6q0-3 4-3t4 3zM16 7.500h8V10h-8z" fill="#d89a36" />
      <path d="M15.500 6.700h9" stroke="#f3d79a" />
    </>
  ),
  merge: (
    <>
      <path d="M16 3l4 2 1 2-4 3" fill="none" stroke="#c9a0a4" strokeWidth="1.600" />
      <path d="M18 2.500h2.500V5H18zM19 8.500h3V11h-3z" fill="#76242e" />
      <circle cx="23" cy="7" r="1.300" fill="#8a3a42" />
    </>
  ),
  switch: <path d="M15.500 9V7.500L17 6l1.500 1L20 5l1.500 1.500L23 5.500 25 7v2z" fill="#5f7d59" />,
  null: null,
  soften: (
    <>
      <path d="M16 6l6 0 3 4-5 1z" fill="#d98a1e" />
      <path d="M19 8l3-6M21 9l2-5" stroke="#8a5a1c" strokeWidth=".8" />
    </>
  ),
};

const NodeArt = ({ kind, ins }: { kind: NodeKind; ins: number[] }) => {
  const width = kind === "null" ? 34 : 40;
  const mid = width / 2;
  return (
    <svg width={width} height="13" viewBox={`0 0 ${width} 13`} overflow="visible" aria-hidden="true">
      {ins.map((x) => <circle key={x} cx={x} cy={kind === "null" ? -6 : -3.200} r="2" fill="#d2d2d2" />)}
      <circle cx={mid} cy={kind === "null" ? 19 : kind === "switch" ? 18 : 16} r="2" fill="#d2d2d2" />
      {kind === "switch" && (
        <>
          <path d="M8 -1.500q12-6 24 0" fill="none" stroke="#b5b5b5" strokeWidth="4" strokeLinecap="round" />
          <path d="M0 4l15-5q5-1.500 10 0l15 5q3 2.500 0 5l-15 5q-5 1.500-10 0L0 9q-3-2.500 0-5z" fill="#c4f5a6" />
        </>
      )}
      {kind === "merge" && (
        <>
          <path d="M6 -2q14-3 28 0" fill="none" stroke="#b9b9b9" strokeWidth="4" strokeLinecap="round" />
          <path d="M5 .5q15-2 30 0 5 .5 5 6t-5 6.500q-15 2-30 0-5-1-5-6.500t5-6z" fill="#d8d8d8" />
        </>
      )}
      {kind === "null" && (
        <>
          <path d="M6.500 1l21 11M27.500 1l-21 11" stroke="#cdb93a" strokeWidth="10" strokeLinecap="round" />
          <path d="M6.500 1l21 11M27.500 1l-21 11" stroke="#303030" strokeWidth="8.600" strokeLinecap="round" />
          <path d="M6.500 1l21 11M27.500 1l-21 11" stroke="#8798a8" strokeWidth="7.400" strokeLinecap="round" />
          <circle cx="17" cy="6.500" r="3.300" fill="#8292a2" stroke="#bcc8d4" strokeWidth="1.200" />
          <path d="M20 8l4 4h-2l1 2-1 .5-1-2-1 1z" fill="#fff" stroke="#222" strokeWidth=".3" />
        </>
      )}
      {kind === "subnet" && <rect x="1.500" y="1.500" width="40" height="13" rx="2" fill="#303030" stroke="#dcdcdc" />}
      {!["switch", "merge", "null"].includes(kind) && <rect width="40" height="13" rx="1.500" fill="#d9d9d9" />}
      {kind !== "null" && (
        <path d="M5 1L3.500 12M10.500 1L9 12M15.500 1l-1 11M28 1l-1 11M33.500 1L32 12M37 1l-1 11" stroke={kind === "switch" ? "#a3cf89" : "#b2b2b2"} strokeWidth=".8" />
      )}
      {glyphs[kind]}
    </svg>
  );
};

interface GraphNode {
  x: number;
  y: number;
  kind: NodeKind;
  name: string;
  type?: string;
  info?: string;
  ins?: number[];
}
const graph: GraphNode[] = [
  { x: 208, y: 12, kind: "subnet", name: "Greeble2", type: "Subnetwork", ins: [8, 16, 24, 32] },
  { x: 53, y: 57, kind: "group", name: "group2", info: "uvgroup", ins: [12, 28] },
  { x: 216, y: 57, kind: "group", name: "group3", info: "uvgroup", ins: [12, 28] },
  { x: 53, y: 110, kind: "flatten", name: "uvflatten1", info: "uv", ins: [20] },
  { x: 216, y: 110, kind: "flatten", name: "uvflatten2", info: "uv", ins: [20] },
  { x: 54, y: 156, kind: "layout", name: "uvlayout1", info: "Coverage: 71.85%", ins: [12, 28] },
  { x: 217, y: 156, kind: "layout", name: "uvlayout2", info: "Coverage: 82.48%", ins: [12, 28] },
  { x: 54, y: 222, kind: "material", name: "M_Greeble1", type: "Material", ins: [20] },
  { x: 217, y: 222, kind: "material", name: "M_Greeble2", type: "Material", ins: [20] },
  { x: 295, y: 254, kind: "null", name: "null1", ins: [17] },
  { x: 217, y: 294, kind: "switch", name: "Skip", type: "Switch" },
  { x: 80, y: 363, kind: "merge", name: "merge1" },
  { x: 86, y: 419, kind: "soften", name: "soften_normals2", ins: [20] },
];
const cutOff = [
  { y: 6, name: "an2" },
  { y: 57, name: "p4", info: "up" },
  { y: 108, name: "wrap1" },
  { y: 148, name: "out3", info: "age: 80.02%" },
  { y: 222, name: "dy", type: "al" },
];

const NetworkEditor = () => (
  <Network>
    <Watermark>Indie Edition</Watermark>
    <Watermark $right>Geometry</Watermark>
    <Wires width="398" height="468" aria-hidden="true">
      <g fill="none" stroke="#56697f" strokeWidth="1">
        <path d="M66 0L65 53M67 0q3 2 8 2h134q6 0 8 6M228 28v26M73 73v34M236 73v34M73 126l-7 27M236 126l-7 27M74 172v47M237 172v47M74 238l26 122M237 238v51M237 313q-1 7-10 11l-112 27q-6 3-7 8M0 281l86 69q4 4 6 10M100 379l6 37M106 435l-6 30" />
      </g>
      <path d="M87 468a19 15 0 0 1 38 0z" fill="#4a6aae" />
      <path d="M94 468a13 9 0 0 1 24 0z" fill="#8f6cc4" />
      <circle cx="99" cy="465" r="2" fill="#dcdcdc" />
      <circle cx="114" cy="465" r="2" fill="#dcdcdc" />
      <path d="M132 435h5v4h-5zM133 435v-2h3v2" fill="#7d7d7d" stroke="#7d7d7d" strokeWidth=".6" />
    </Wires>
    {graph.map((n) => (
      <NodeBox key={n.name} $x={n.x} $y={n.y}>
        <NodeArt kind={n.kind} ins={n.ins || []} />
        <NodeText>
          {n.type && <NodeType>{n.type}</NodeType>}
          {n.name}
          {n.info && <NodeInfo>{n.info}</NodeInfo>}
        </NodeText>
      </NodeBox>
    ))}
    {cutOff.map((n) => (
      <NodeBox key={n.name} $x={0} $y={n.y}>
        <NodeText>
          {n.type && <NodeType>{n.type}</NodeType>}
          {n.name}
          {n.info && <NodeInfo>{n.info}</NodeInfo>}
        </NodeText>
      </NodeBox>
    ))}
    <Hint>Hold 8 or Pad8 to disable dropping nodes on existing wires.</Hint>
  </Network>
);

/* ---------- parameters ---------- */

const ParamHead = styled.div`
  display: flex;
  align-items: center;
  flex: 0 0 12px;
  gap: 1px;
  padding: 0 2px;
  background: #333;
  border-top: 1px solid #222;
`;
const ParamName = styled.label`
  margin-right: 1px;
  font-weight: 700;
  color: #ddd;
`;
const NameInput = styled(DarkInput)`
  padding-left: 1px;
  font-family: "DejaVu Sans Mono", monospace;
  color: #ddd;
`;
const Params = styled.div`
  display: flex;
  flex-direction: column;
  gap: 2px;
  padding-left: 66px;
`;
const Param = styled.label`
  display: flex;
  align-items: center;
  gap: 3px;
  color: #6c6c6c;
  font-family: ${SMALL};
  white-space: nowrap;
`;
const Tick = styled.input`
  appearance: none;
  width: 5px;
  height: 5px;
  background: #2f2f2f;
  &:checked {
    clip-path: polygon(0 50%, 35% 75%, 90% 0, 100% 10%, 40% 100%, 0 65%);
    background: #d0d0d0;
  }
`;

/* ---------- playbar ---------- */

const PlayBar = styled.footer`
  position: relative;
  display: flex;
  flex: 0 0 30px;
  gap: 3px;
  padding-left: 5px;
  border-top: 1px solid #484848;
  background: #2e2e2e;
`;
const Transport = styled.div`
  display: flex;
  flex-direction: column;
  justify-content: space-evenly;
  flex: 0 0 90px;
`;
const TransportRow = styled.div`
  display: flex;
  align-items: center;
  gap: 2px;
`;
const Timeline = styled.div`
  display: flex;
  flex-direction: column;
  flex: 1;
  min-width: 0;
`;
const Ruler = styled.svg`
  width: 100%;
  height: 17px;
  overflow: hidden;
  font-family: ${SMALL};
  font-size: 4px;
`;
const RangeRow = styled.div`
  display: flex;
  align-items: center;
  flex: 1;
  gap: 3px;
  padding: 0 0 1px 27px;
`;
const RangeLine = styled.div`
  flex: 1;
  height: 1px;
  background: #909090;
`;
const FrameInput = styled.input`
  width: 17px;
  height: 8px;
  padding-left: 2px;
  background: #161616;
  font-family: "DejaVu Sans Mono", monospace;
  font-size: 5px;
`;
const KeyButton = styled.button`
  display: flex;
  align-items: center;
  justify-content: center;
  align-self: center;
  width: 16px;
  height: 16px;
  border-radius: 50%;
  background: #3a3a3a;
`;
const KeyPanel = styled.div`
  display: flex;
  flex-direction: column;
  justify-content: center;
  gap: 3px;
  flex: 0 0 80px;
  margin-left: 4px;
  padding: 1px 3px 0 0;
`;
const KeyRow = styled.div`
  display: flex;
  gap: 2px;
`;
const WideButton = styled.button`
  display: flex;
  align-items: center;
  justify-content: space-between;
  flex: 1;
  height: 9px;
  padding: 0 1px 0 7px;
  background: linear-gradient(#505050, #3e3e3e);
  white-space: nowrap;
`;
const SourceMark = styled.div`
  position: absolute;
  left: 8px;
  top: 1px;
  display: flex;
  align-items: center;
  gap: 4px;
  color: #fff;
  font-family: "Noto Sans CJK SC", sans-serif;
  font-size: 22px;
  font-weight: 500;
  line-height: 28px;
  white-space: nowrap;
  opacity: 0.66;
  pointer-events: none;
`;
const StatusBar = styled.div`
  display: flex;
  align-items: flex-start;
  flex: 0 0 7px;
  padding-top: 2px;
  overflow: hidden;
  background: #141414;
  color: #b8b8b8;
  white-space: nowrap;
`;
const UpdateMode = styled.div`
  display: flex;
  align-items: center;
  justify-content: space-between;
  width: 71px;
  margin-left: auto;
  padding: 0 5px 0 3px;
  background: #2d2d2d;
`;

const Ticks = () => (
  <Ruler aria-label="Timeline">
    {Array.from({ length: 200 }, (_, i) => {
      const f = i + 1;
      const x = `${((i / 199.600) * 100).toFixed(3)}%`;
      const major = f % 20 === 0;
      return <line key={f} x1={x} x2={x} y1={major ? 6 : 8} y2={major ? 13 : 11} stroke={major ? "#7d7d7d" : "#5c5c5c"} strokeWidth="1" />;
    })}
    <path d="M4 9.500h2000" stroke="#4c4c4c" />
    {Array.from({ length: 10 }, (_, i) => (
      <text key={i} x={`${((((i + 1) * 20 - 1) / 199.600) * 100).toFixed(3)}%`} y="4" fill="#7d7d7d" textAnchor={i === 9 ? "end" : "start"}>{(i + 1) * 20}</text>
    ))}
    <rect x=".5" y=".5" width="10" height="10" fill="#111" stroke="#aaa" />
    <text x="4" y="7" fill="#eee" fontSize="5">1</text>
  </Ruler>
);

/* ---------- composed parts ---------- */

const icons = (names: string[], on: string[] = [], dim: string[] = []) =>
  names.map((n, i) => (
    <IconButton key={n + i} aria-label={n} $on={on.includes(`${n}${i}`)} $dim={dim.includes(n)}>
      <Icon name={n} />
    </IconButton>
  ));

const leftTools: [string, string][] = [
  ["box", "Box"], ["sphere", "Sphere"], ["tube", "Tube"], ["torus", "Torus"], ["grid", "Grid"], ["nullAxes", "Null"],
  ["diag", "Line"], ["circle", "Circle"], ["curve", "Curve Bezier"], ["pen", "Draw Curve"], ["path", "Path"],
  ["spray", "Spray Paint"], ["font", "Font"], ["platonic", "Platonic\nSolids"], ["lsystem", "L-System"],
  ["metaball", "Metaball"], ["file", "File"], ["spiral", "Spiral"], ["helix", "Helix"], ["quick", "Quick Shapes"],
];
const rightTools: [string, string][] = [
  ["camera", "Camera"], ["sun", "Point Light"], ["spot", "Spot Light"], ["area", "Area Light"], ["flame", "Geometry\nLight"],
  ["flame", "Volume Light"], ["distant", "Distant Light"], ["env", "Environment\nLight"], ["sky", "Sky Light"], ["sphere", "GI Light"],
  ["caustic", "Caustic Light"], ["portal", "Portal Light"], ["bulb", "Ambient Light"], ["stereo", "Stereo\nCamera"],
  ["camera", "VR Camera"], ["person", "Switcher"], ["gamepad", "Gamepad\nCamera"],
];

const ShelfSet = ({ tabs, tools }: { tabs: string[]; tools: [string, string][] }) => (
  <Shelf>
    <ShelfTabs>
      {tabs.map((t, i) => <ShelfTab key={t} $active={i === 0}>{t}</ShelfTab>)}
      <PlusTab aria-label="Add shelf">+</PlusTab>
      <TabTail><Caret /></TabTail>
    </ShelfTabs>
    <ShelfTools>
      {tools.map(([icon, label]) => (
        <Tool key={label} $two={label.includes("\n")}>
          <Icon name={icon} size={9} color={icon === "sphere" ? "#b5b9bc" : "#606468"} />
          <ToolLabel $two={label.includes("\n")}>{label}</ToolLabel>
        </Tool>
      ))}
    </ShelfTools>
  </Shelf>
);

const Tabs = ({ names }: { names: string[] }) => (
  <PaneTabs>
    {names.map((n, i) => <PaneTab key={n} $active={i === 0}>{n}</PaneTab>)}
    <PlusTab aria-label="Add tab">+</PlusTab>
    <TabTail><Icon name="square" size={5} color="#ddd" /><Caret /></TabTail>
  </PaneTabs>
);

const PathBar = ({ extra = [] }: { extra?: string[] }) => (
  <PathRow>
    <PathNav aria-label="Back"><Icon name="back" size={6} /></PathNav>
    <PathNav aria-label="Forward"><Icon name="fwd" size={6} /></PathNav>
    <PathField>
      <PathPart href="#obj"><Icon name="objNet" size={6} color="#9da1a4" />obj</PathPart>
      <PathPart href="#geo1"><Icon name="geo" size={7} />geo1</PathPart>
      <DropButton aria-label="Path history"><Caret /></DropButton>
    </PathField>
    <IconButton aria-label="Pin"><Icon name="pushpin" size={7} /></IconButton>
    <IconButton aria-label="Link"><Icon name="globe" /></IconButton>
    {extra.map((n) => <IconButton key={n} aria-label={n}><Icon name={n} /></IconButton>)}
  </PathRow>
);

export default function App() {
  return (
    <>
      <GlobalStyle />
      <Desktop>
        <TitleBar>
          <AppBadge />
          C:/PROJECTS/Wingfox01/Houdini02/Wingfox02.hiplc - Houdini FX 20.5.278 - Py3.11
          <WindowButtons>
            <WindowButton aria-label="Minimize"><svg width="5" height="6"><path d="M0 3.500h5" stroke="#333" /></svg></WindowButton>
            <WindowButton aria-label="Restore"><svg width="5" height="6"><path d="M.5 2.500h3v3h-3zM1.500 2V.5h3v3H4" fill="none" stroke="#333" /></svg></WindowButton>
            <WindowButton aria-label="Close"><svg width="5" height="6"><path d="M.5 1l4 4M4.500 1l-4 4" stroke="#333" /></svg></WindowButton>
          </WindowButtons>
        </TitleBar>

        <MenuBar>
          {["File", "Edit", "Render", "Assets", "Windows", "Labs", "Help"].map((m) => <MenuItem key={m}>{m}</MenuItem>)}
          <DesktopPicker><Icon name="pane" size={6} />MyDesk01</DesktopPicker>
          <Icon name="updown" size={5} />
          <DesktopPicker><Icon name="target" size={6} />Main</DesktopPicker>
          <Icon name="updown" size={5} />
          <DesktopPicker $push><Icon name="camera" size={6} />Main</DesktopPicker>
          <Icon name="updown" size={5} />
          <Icon name="help" size={7} />
        </MenuBar>

        <Shelves>
          <ShelfSet
            tabs={["Create", "Modify", "Model", "Polygon", "Deform", "Texture", "Rigging", "Characters", "Constraints", "Hair Utils", "Guide Process", "Terrain FX", "Simple FX", "Volume"]}
            tools={leftTools}
          />
          <ShelfSet
            tabs={["Lights and Cameras", "Collisions", "Particles", "Grains", "Vellum", "Rigid Bodies", "Particle Fluids", "Viscous Fluids", "Oceans", "Pyro FX", "FEM", "Wires", "Crowds", "Drive Simulation"]}
            tools={rightTools}
          />
        </Shelves>

        <Workspace>
          <Pane>
            <Tabs names={["Scene View", "Animation Editor", "Render View", "Composite View", "Motion FX View"]} />
            <PathBar extra={["cloud", "picture", "list"]} />
            <Toolbar>
              <ToolGroup $start><Icon name="dotgrid" /></ToolGroup>
              <ToolGroup $gap={3}>{icons(["axisPick", "arrowPick", "loop", "cards", "thumb", "blob", "skull", "camBox"], ["cards3"], ["blob"])}</ToolGroup>
              <ToolGroup $end>{icons(["tree", "help"])}</ToolGroup>
            </Toolbar>
            <SceneArea>
              <Strip $wide>
                <StripGroup $h={32}>{icons(["spot", "bulb", "env"], ["bulb1"])}</StripGroup>
                <StripGroup $h={82}>{icons(["cursor", "lock", "select", "select", "ring", "joint", "axes"], ["lock1"])}</StripGroup>
                <StripGroup $h={46}>{icons(["magnetGrid", "magnetDot", "magnetDot", "magnet"])}</StripGroup>
                <StripGroup $h={35}>{icons(["blob", "circle", "bowl"], ["blob0"])}</StripGroup>
                <StripGroup $h={21} $bottom>{icons(["cloud", "sphere"])}</StripGroup>
              </Strip>
              <Viewport>
                <Model />
                <ViewTitle><Icon name="blob" size={11} />View</ViewTitle>
                <CameraMenus>
                  <CameraMenu>Persp ▾</CameraMenu>
                  <CameraMenu>No cam ▾</CameraMenu>
                </CameraMenus>
                <Stats>{"193,159  prims\n93,413 points"}</Stats>
              </Viewport>
              <Strip>
                <StripGroup $h={254}>
                  {icons(
                    ["eye", "eye", "lock", "pin", "sphere", "bulb", "pin", "checker", "marker", "cloud", "dot", "tick", "slash", "nodes", "star", "star", "corner", "brush", "square", "star", "layout", "joint", "dot", "bowl"],
                    ["bulb5", "checker7", "brush17", "square18", "bowl23"],
                  )}
                </StripGroup>
                <StripGroup $h={10}>{icons(["pin"], ["pin0"])}</StripGroup>
                <StripGroup $h={32} $bottom>{icons(["info", "layout", "frame"], ["layout1"])}</StripGroup>
              </Strip>
            </SceneArea>
            <Splitter />
            <Tabs names={["Geometry Spreadsheet"]} />
            <PathBar />
            <SheetBar>
              <span><b>Node:</b> null1</span>
              <ToolGroup>{icons(["layout", "dot", "sun", "geo"], ["layout0"])}</ToolGroup>
              <label htmlFor="group">Group:</label>
              <DarkInput id="group" />
              <IconButton aria-label="Filter group"><Icon name="funnel" size={6} /></IconButton>
              <SheetSelect aria-label="View"><option>View</option></SheetSelect>
              <SheetSelect $off aria-label="Intrinsics"><option>Intrinsics</option></SheetSelect>
              <label htmlFor="attributes">Attributes:</label>
              <DarkInput id="attributes" />
              <ToolGroup>{icons(["funnel", "arrowPick"])}</ToolGroup>
              <IconButton aria-label="Help"><Icon name="help" size={7} /></IconButton>
            </SheetBar>
            <SheetBody>
              <Sheet>
                <colgroup>
                  <ColumnWidth $w={36} /><ColumnWidth $w={36} /><ColumnWidth $w={36} /><ColumnWidth $w={36} /><ColumnWidth />
                </colgroup>
                <thead><tr><th /><th>P[x]</th><th>P[y]</th><th>P[z]</th><th /></tr></thead>
                <tbody>
                  {[0, 1, 2, 3, 4].map((r) => <tr key={r}><td /><td /><td /><td /><td align="right">{r === 4 ? "Indie" : ""}</td></tr>)}
                </tbody>
              </Sheet>
            </SheetBody>
            <ScrollTrack />
          </Pane>

          <Pane $tone="#303030">
            <Tabs names={["/obj/geo1", "Tree View", "Material Palette", "Asset Browser"]} />
            <PathBar />
            <NetworkMenu>
              {["Add", "Edit", "Go", "View", "Tools", "Layout", "Labs", "Help"].map((m) => <MenuItem key={m}>{m}</MenuItem>)}
              <ToolGroup $end $gap={0}>{icons(["wrench", "tree", "list"])}</ToolGroup>
              <ToolGroup $gap={0}>{icons(["layout", "gridLine"])}</ToolGroup>
              <ToolGroup $gap={0}>{icons(["frame", "page", "picture", "basket"])}</ToolGroup>
              <ToolGroup $gap={0}>{icons(["search", "frame"])}</ToolGroup>
            </NetworkMenu>
            <NetworkEditor />
          </Pane>

          <Pane $tone="#3a3a3a">
            <Tabs names={["null1", "Take List", "Performance Monitor"]} />
            <PathBar />
            <ParamHead>
              <IconButton aria-label="Node type"><Icon name="circle" size={7} /></IconButton>
              <ParamName htmlFor="nodeName">Null</ParamName>
              <NameInput id="nodeName" defaultValue="null1" />
              {icons(["gear", "brush", "search", "info", "help"])}
            </ParamHead>
            <Params>
              <Param><Tick type="checkbox" defaultChecked />Copy Input (Note: Input will be still cooked if disabled)</Param>
              <Param><Tick type="checkbox" />Cache Input</Param>
            </Params>
          </Pane>
        </Workspace>

        <PlayBar>
          <Transport>
            <TransportRow>{icons(["first", "prev", "play", "play", "fwd", "dotgrid"], ["play2"])}</TransportRow>
            <TransportRow>{icons(["sphere", "pin", "bowl", "clock"], ["clock3"])}</TransportRow>
          </Transport>
          <Timeline>
            <Ticks />
            <RangeRow>
              <RangeLine />
              <FrameInput aria-label="Range end" defaultValue="200" />
              <FrameInput aria-label="Global end" defaultValue="200" />
            </RangeRow>
          </Timeline>
          <KeyButton aria-label="Set key"><Icon name="key" color="#777" /></KeyButton>
          <KeyPanel>
            <KeyRow>
              <IconButton aria-label="Scope"><Icon name="checker" /></IconButton>
              <WideButton>0 keys, 0/0 channels<Icon name="updown" size={5} color="#888" /></WideButton>
            </KeyRow>
            <KeyRow>
              <IconButton aria-label="Channels"><Icon name="scope" /></IconButton>
              <WideButton>Key All Channels<Icon name="updown" size={5} color="#999" /></WideButton>
            </KeyRow>
          </KeyPanel>
          <SourceMark>
            <svg width="40" height="27" viewBox="0 0 40 27" aria-hidden="true">
              <g fill="none" stroke="#fff" strokeWidth="3">
                <path d="M4 5v20M20 12q-10 0-14 8M21 13q-8 2-8 7 0 5 10 4" />
                <circle cx="24" cy="8" r="5" />
                <circle cx="34" cy="8" r="5" />
              </g>
            </svg>
            大数跨境
          </SourceMark>
        </PlayBar>

        <StatusBar>
          Undid: Create dot; Next: Change selection
          <UpdateMode><Icon name="sphere" size={6} /><Icon name="fwd" size={6} color="#777" />Auto Update<Icon name="updown" size={5} /></UpdateMode>
        </StatusBar>
      </Desktop>
    </>
  );
}
